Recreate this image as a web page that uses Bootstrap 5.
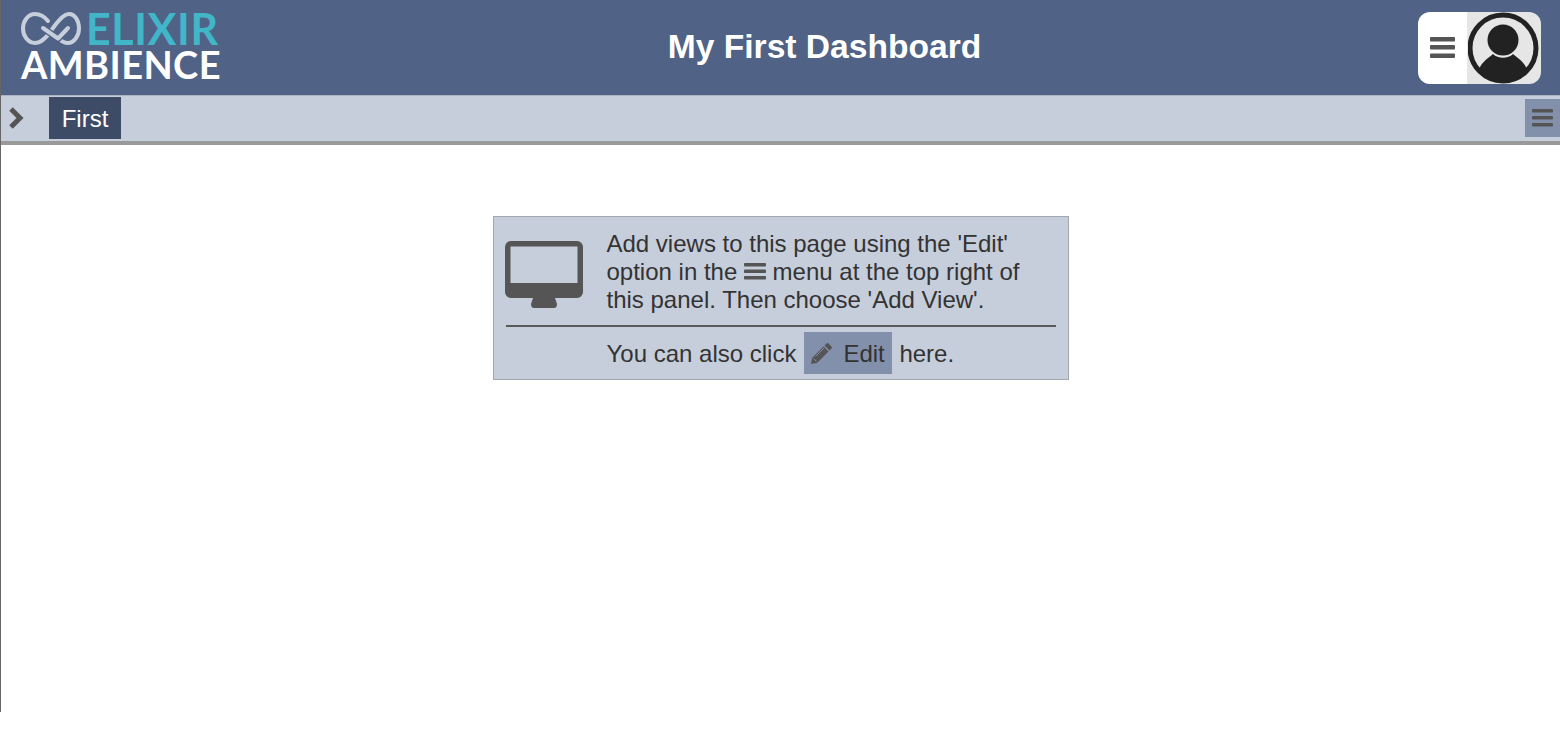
<!DOCTYPE html>
<html lang="en">
<head>
  <meta charset="UTF-8">
  <title>My First Dashboard</title>
  <link href="https://cdn.jsdelivr.net/npm/bootstrap@5.3.3/dist/css/bootstrap.min.css" rel="stylesheet">
  <style>
    body { font-family: "Liberation Sans", Arial, sans-serif; background: #fff; color: #333; }
    .page-wrap { height: 712px; border-left: 1px solid #666; }
    .top-bar { height: 95px; background: #506285; }
    .logo-box { width: 219px; padding: 10px 0 0 20px; font-family: Lato, sans-serif; font-weight: 700; line-height: 1; }
    .logo-top { height: 37px; gap: 5px; }
    .logo-word1 { color: #41b6c8; font-size: 43px; letter-spacing: .6px; }
    .logo-word2 { color: #fff; font-size: 38px; letter-spacing: .4px; margin-top: -2px; white-space: nowrap; }
    .dash-title { color: #fff; font-size: 33.6px; font-weight: 700; line-height: 1; padding-left: 11px; margin-top: -2px; }
    .user-box { width: 123px; height: 72px; margin: 12px 19px 0 0; border-radius: 12px; overflow: hidden; }
    .user-menu { width: 49px; padding-left: 2px; background: #fff; }
    .user-pic { width: 74px; background: #e6e6e6; }
    .tab-bar { height: 50px; background: #c7cedb; border-top: 1px solid #aab3c2; border-bottom: 4px solid #999; }
    .tab-toggle { width: 48px; padding: 10px 0 0 7px; }
    .tab-first { width: 72px; height: 42px; margin-top: 1px; background: #3e4b66; color: #fff; font-size: 24px; line-height: 44px; }
    .tab-menu { width: 35px; height: 38px; margin-top: 3px; background: #8290ac; }
    .notice-area { padding-top: 71px; }
    .notice-box { width: 576px; height: 164px; background: #c7cedb; border: 1px solid #a3a8b0; padding: 0 12px; font-size: 24px; line-height: 28px; color: #333; }
    .notice-top { height: 110px; border-bottom: 2px solid #5a5a5a; padding-top: 13px; }
    .notice-icon { width: 102px; margin-left: -1px; padding-top: 11px; }
    .notice-bottom { padding: 5px 0 0 101px; line-height: 44px; }
    .edit-btn { width: 88px; height: 42px; margin: 0 7px 0 8px; padding-left: 6px; gap: 10px; background: #8290ac; }
    .edit-label { padding-top: 2px; }
  </style>
</head>
<body>
  <div class="page-wrap">
    <div class="top-bar d-flex justify-content-between">
      <div class="logo-box">
        <div class="logo-top d-flex align-items-center">
          <svg width="60" height="36" viewBox="0 0 60 36" fill="none" stroke="#c7cfdc" stroke-width="4" stroke-linecap="round" stroke-linejoin="round">
            <path d="M27 10 C23 5 18 3 14 3 C7 3 2 10 2 17.500 C2 25 7 32 14 32 C19 32 22 29 26 25 L35 13 C39 8 43 3 48 3 C54 3 58 10 58 17.500 C58 25 53 32 47 32 C43 32 40 30 37 27.500"/>
            <path d="M22 17 L37 27.500 L47 17" stroke="#506285" stroke-width="7"/>
            <path d="M22 17 L37 27.500 L47 17"/>
          </svg>
          <span class="logo-word1">ELIXIR</span>
        </div>
        <div class="logo-word2">AMBIENCE</div>
      </div>
      <div class="dash-title align-self-center">My First Dashboard</div>
      <div class="user-box d-flex">
        <div class="user-menu d-flex align-items-center justify-content-center">
          <svg width="26" height="24" viewBox="0 0 26 24" fill="#555"><rect y="1" width="25" height="4.500" rx="1"/><rect y="9" width="25" height="4.500" rx="1"/><rect y="17.500" width="25" height="4.500" rx="1"/></svg>
        </div>
        <div class="user-pic d-flex align-items-center justify-content-center">
          <svg width="72" height="72" viewBox="1 0 72 72">
            <defs><clipPath id="avatarClip"><circle cx="36" cy="36" r="33"/></clipPath></defs>
            <circle cx="36" cy="36" r="33" fill="#e6e6e6" stroke="#222" stroke-width="5"/>
            <circle cx="36" cy="28" r="15.500" fill="#222"/>
            <path clip-path="url(#avatarClip)" d="M12 72 V60 C12 52 20 47 26 42 C31 47 41 47 46 42 C52 47 60 52 60 60 V72 Z" fill="#222"/>
          </svg>
        </div>
      </div>
    </div>
    <div class="tab-bar d-flex justify-content-between">
      <div class="d-flex">
        <div class="tab-toggle">
          <svg width="17" height="23" viewBox="0 0 17 23" fill="none" stroke="#555" stroke-width="5"><path d="M3 2 L12 11 L3 20"/></svg>
        </div>
        <div class="tab-first text-center">First</div>
      </div>
      <div class="tab-menu d-flex align-items-center justify-content-center">
        <svg width="22" height="20" viewBox="0 0 22 20" fill="#555"><rect y="1" width="21" height="3.500" rx="1"/><rect y="8" width="21" height="3.500" rx="1"/><rect y="15" width="21" height="3.500" rx="1"/></svg>
      </div>
    </div>
    <div class="notice-area d-flex justify-content-center">
      <div class="notice-box">
        <div class="notice-top d-flex">
          <div class="notice-icon">
            <svg width="78" height="68" viewBox="0 0 78 68">
              <path fill="#555" fill-rule="evenodd" d="M6 0 H72 A6 6 0 0 1 78 6 V51 A6 6 0 0 1 72 57 H6 A6 6 0 0 1 0 51 V6 A6 6 0 0 1 6 0 Z M5.500 5.500 V42 H72.500 V5.500 Z"/>
              <path fill="#555" d="M28 57 H50 L52 63 Q52 67 49 67 H29 Q26 67 26 63 Z"/>
            </svg>
          </div>
          <div>Add views to this page using the 'Edit'<br>option in the
            <svg class="align-baseline" width="22" height="17" viewBox="0 0 22 17" fill="#555"><rect width="22" height="3.500" rx=".8"/><rect y="6.500" width="22" height="3.500" rx=".8"/><rect y="13" width="22" height="3.500" rx=".8"/></svg>
            menu at the top right of<br>this panel. Then choose 'Add View'.</div>
        </div>
        <div class="notice-bottom d-flex">
          <span>You can also click</span>
          <span class="edit-btn d-flex align-items-center">
            <svg width="23" height="23" viewBox="0 0 23 23" fill="#555">
              <path d="M16.500 1.500 Q17.500 .5 18.500 1.500 L21.500 4.500 Q22.500 5.500 21.500 6.500 L19.500 8.500 L14.500 3.500 Z M13.500 4.500 L18.500 9.500 L7 21 L1 22 L2 16 Z"/>
              <path d="M3.500 16.500 L6.500 19.500 M5.500 14.500 L14 6" stroke="#8290ac" stroke-width="1" fill="none"/>
            </svg>
            <span class="edit-label">Edit</span>
          </span>
          <span>here.</span>
        </div>
      </div>
    </div>
  </div>
  <script src="https://cdn.jsdelivr.net/npm/bootstrap@5.3.3/dist/js/bootstrap.bundle.min.js"></script>
</body>
</html>
